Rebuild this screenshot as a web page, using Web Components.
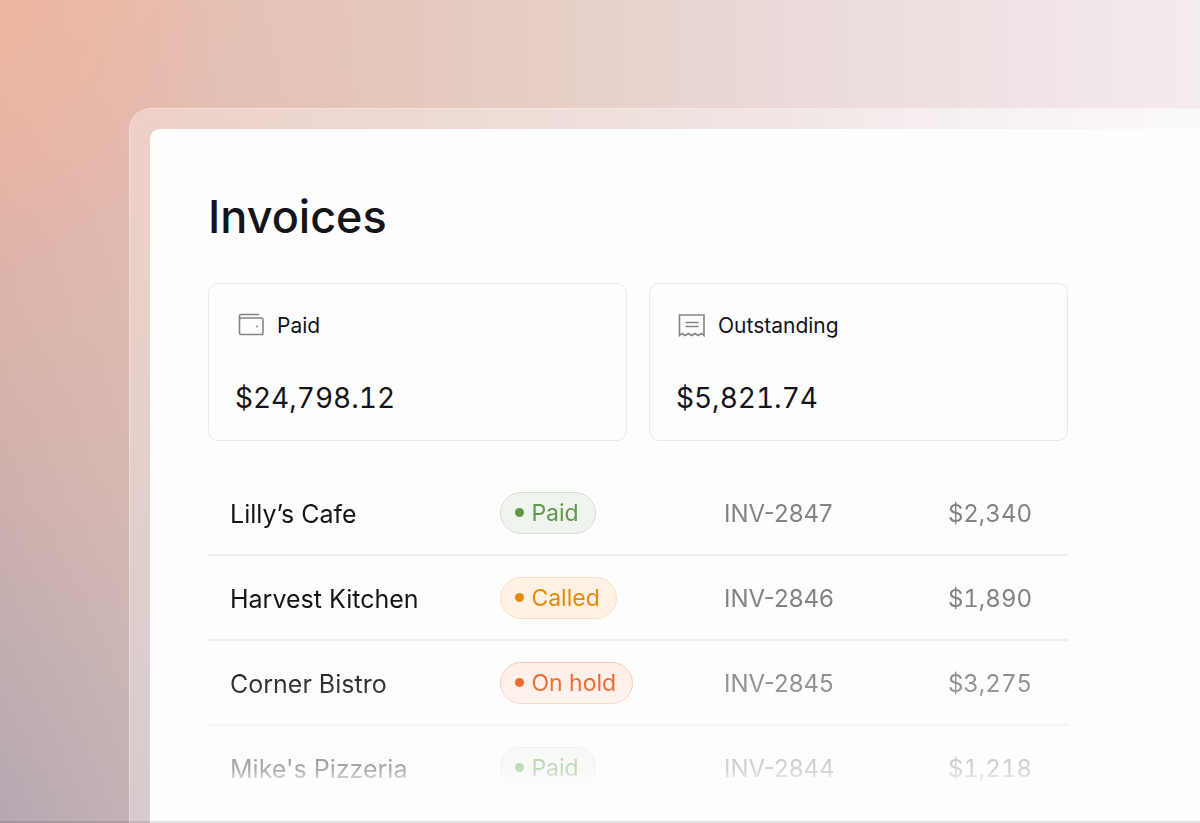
<!DOCTYPE html>
<html lang="en">
<head>
<meta charset="UTF-8">
<meta name="viewport" content="width=device-width, initial-scale=1.0">
<title>Invoices</title>
<style>
  body {
    margin: 0;
    font-family: Inter, "Liberation Sans", sans-serif;
    color: #151419;
  }
</style>
</head>
<body>

<app-stage>
  <app-panel>
    <span slot="title">Invoices</span>
    <stat-card icon="wallet" label="Paid">$24,798.12</stat-card>
    <stat-card icon="receipt" label="Outstanding">$5,821.74</stat-card>
    <invoice-table slot="list"></invoice-table>
  </app-panel>
</app-stage>

<script>
const icons = {
  wallet: `
    <rect x="2.5" y="6" width="23.5" height="16.5" rx="1.5"/>
    <path d="M2.5 7.5V4Q2.5 2.5 4 2.5H22"/>
    <circle cx="20" cy="14.5" r="1" fill="currentColor" stroke="none"/>`,
  receipt: `
    <path d="M1.5 3H26V23.5L23.5 21.5 20 23.5 17 21.5 13.5 23.5 10.5 21.5 7 23.5 4 21.5 1.5 23.5Z"/>
    <path d="M7.5 10.5H20.5M7.5 14.5H20.5"/>`
};

const invoices = [
  { name: 'Lilly’s Cafe', status: 'Paid', number: 'INV-2847', amount: '$2,340' },
  { name: 'Harvest Kitchen', status: 'Called', number: 'INV-2846', amount: '$1,890' },
  { name: 'Corner Bistro', status: 'On hold', number: 'INV-2845', amount: '$3,275' },
  { name: 'Mike\'s Pizzeria', status: 'Paid', number: 'INV-2844', amount: '$1,218' }
];

// Full page gradient with the glass frame in the lower right
class AppStage extends HTMLElement {
  constructor() {
    super();
    this.attachShadow({ mode: 'open' });
  }

  connectedCallback() {
    this.shadowRoot.innerHTML = `
      <style>
        :host {
          display: flex;
          box-sizing: border-box;
          position: relative;
          height: 100vh;
          overflow: hidden;
          padding: 108px 0 0 129px;
          background:
            radial-gradient(ellipse 18% 30% at 0 0, rgba(240, 182, 158, 0.8), rgba(240, 182, 158, 0)),
            linear-gradient(90deg, rgba(230, 200, 188, 0) 0%, #e5c9be 36%, #e7d1ca 50%, #ebdbdb 68%, #efe3e5 84%, #f4e9eb 96%, #f3ecec 100%),
            linear-gradient(180deg, #e6b8a9 0%, #e2b3a8 22%, #d9b3a9 40%, #cfb0ad 60%, #c0adb0 80%, #b5a7b2 100%);
        }
        :host::after {
          content: '';
          position: absolute;
          left: 0;
          right: 0;
          bottom: 0;
          height: 2px;
          background: rgba(0, 0, 0, 0.1);
        }
        .frame {
          flex: 1;
          display: flex;
          min-width: 0;
          padding: 20px 0 0 20px;
          border: 1px solid rgba(255, 245, 240, 0.6);
          border-width: 1px 0 0 1px;
          border-radius: 22px 0 0 0;
          background: linear-gradient(90deg, rgba(255, 255, 255, 0.32) 60%, rgba(255, 255, 255, 0.7));
          background-clip: padding-box;
        }
      </style>
      <div class="frame"><slot></slot></div>
    `;
  }
}

class AppPanel extends HTMLElement {
  constructor() {
    super();
    this.attachShadow({ mode: 'open' });
  }

  connectedCallback() {
    this.shadowRoot.innerHTML = `
      <style>
        :host {
          display: block;
          flex: 1;
          min-width: 0;
          padding: 60px 132px 0 58px;
          border-radius: 10px 0 0 0;
          background: #fefdfe;
        }
        h1 {
          margin: 0;
          font-size: 45px;
          line-height: 56px;
          font-weight: 500;
        }
        .cards {
          display: grid;
          grid-template-columns: 1fr 1fr;
          gap: 22px;
          margin: 38px 0 30px;
        }
      </style>
      <main>
        <h1><slot name="title"></slot></h1>
        <div class="cards"><slot></slot></div>
        <slot name="list"></slot>
      </main>
    `;
  }
}

class StatCard extends HTMLElement {
  constructor() {
    super();
    this.attachShadow({ mode: 'open' });
  }

  connectedCallback() {
    const icon = icons[this.getAttribute('icon')];
    const label = this.getAttribute('label');

    this.shadowRoot.innerHTML = `
      <style>
        :host {
          display: block;
          padding: 28px 26px 22px;
          border: 1px solid #e9e7eb;
          border-radius: 10px;
        }
        .label {
          display: flex;
          align-items: center;
          gap: 12px;
          padding-left: 2px;
          font-size: 21px;
          line-height: 28px;
        }
        svg {
          width: 28px;
          height: 28px;
          fill: none;
          stroke: currentColor;
          stroke-width: 1.6;
          color: #858388;
        }
        .amount {
          margin-top: 38px;
          font-size: 28px;
          line-height: 40px;
          font-variant-numeric: tabular-nums;
        }
      </style>
      <div class="label">
        <svg viewBox="0 0 28 28" aria-hidden="true">${icon}</svg>
        <span>${label}</span>
      </div>
      <div class="amount"><slot></slot></div>
    `;
  }
}

class StatusPill extends HTMLElement {
  constructor() {
    super();
    this.attachShadow({ mode: 'open' });
  }

  connectedCallback() {
    const status = this.getAttribute('status');
    let color = '#5d9948'; // Green
    let background = '#eff4ee';
    let border = '#d3dfd0';

    if (status === 'Called') {
        color = '#e68a0c'; // Amber
        background = '#fff2e5';
        border = '#f8dfbd';
    } else if (status === 'On hold') {
        color = '#e95a14'; // Orange
        background = '#ffeee7';
        border = '#f7c9b4';
    }

    this.shadowRoot.innerHTML = `
      <style>
        :host {
          display: inline-flex;
          align-items: center;
          gap: 7px;
          box-sizing: border-box;
          height: 42px;
          padding: 0 16px 0 14px;
          border: 1px solid ${border};
          border-radius: 21px;
          background: ${background};
          color: ${color};
          font-size: 23px;
          line-height: 40px;
          vertical-align: middle;
          white-space: nowrap;
        }
        .dot {
          width: 9px;
          height: 9px;
          border-radius: 50%;
          background: currentColor;
        }
      </style>
      <span class="dot"></span>
      <span>${status}</span>
    `;
  }
}

class InvoiceTable extends HTMLElement {
  constructor() {
    super();
    this.attachShadow({ mode: 'open' });
  }

  connectedCallback() {
    const rows = invoices.map(invoice => `
      <tr>
        <td class="name">${invoice.name}</td>
        <td><status-pill status="${invoice.status}"></status-pill></td>
        <td class="muted">${invoice.number}</td>
        <td class="muted amount">${invoice.amount}</td>
      </tr>`).join('');

    // the list fades out towards the bottom of the window
    this.shadowRoot.innerHTML = `
      <style>
        :host {
          --fade: linear-gradient(180deg, #000 54%, rgba(0, 0, 0, 0.85) 64%, rgba(0, 0, 0, 0.5) 78%, rgba(0, 0, 0, 0.35) 88%, transparent 93%);
          display: block;
          -webkit-mask-image: var(--fade);
          mask-image: var(--fade);
        }
        table {
          width: 100%;
          table-layout: fixed;
          border-collapse: separate;
          border-spacing: 0;
        }
        td {
          box-sizing: border-box;
          height: 85px;
          padding: 0;
          border-bottom: 2px solid #eeedef;
          font-size: 25px;
          line-height: 32px;
          white-space: nowrap;
        }
        tr:last-child td { border-bottom-color: transparent; }
        .name { padding: 2px 0 0 22px; }
        .muted {
          padding-top: 3px;
          color: #858388;
          font-size: 24px;
        }
        .amount {
          padding-right: 36px;
          text-align: right;
          font-variant-numeric: tabular-nums;
        }
      </style>
      <table aria-label="Invoices">
        <colgroup>
          <col style="width: 34%">
          <col style="width: 26%">
          <col style="width: 20%">
          <col style="width: 20%">
        </colgroup>
        <tbody>${rows}</tbody>
      </table>
    `;
  }
}

customElements.define('app-stage', AppStage);
customElements.define('app-panel', AppPanel);
customElements.define('stat-card', StatCard);
customElements.define('status-pill', StatusPill);
customElements.define('invoice-table', InvoiceTable);
</script>
</body>
</html>
